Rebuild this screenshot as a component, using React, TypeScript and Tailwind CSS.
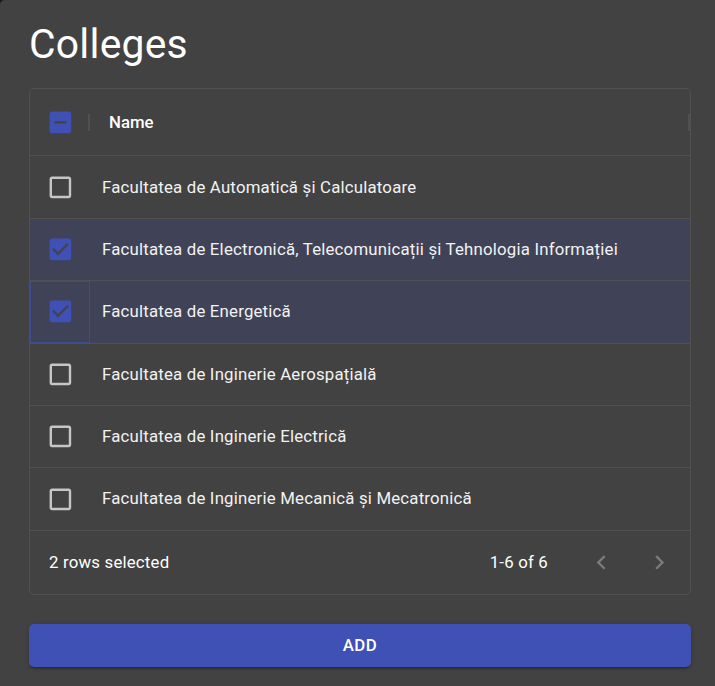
import React from 'react';

const colleges = [
  { id: 1, name: 'Facultatea de Automatică și Calculatoare', selected: false },
  { id: 2, name: 'Facultatea de Electronică, Telecomunicații și Tehnologia Informației', selected: true },
  { id: 3, name: 'Facultatea de Energetică', selected: true, focused: true },
  { id: 4, name: 'Facultatea de Inginerie Aerospațială', selected: false },
  { id: 5, name: 'Facultatea de Inginerie Electrică', selected: false },
  { id: 6, name: 'Facultatea de Inginerie Mecanică și Mecatronică', selected: false },
];

const CheckIcon: React.FC<{ state: 'on' | 'off' | 'mixed' }> = ({ state }) => {
  if (state === 'off') {
    return (
      <svg viewBox="0 0 24 24" className="w-[28.8px] h-[28.8px]" fill="rgba(255,255,255,0.7)">
        <path d="M19 5v14H5V5h14m0-2H5c-1.11 0-2 .9-2 2v14c0 1.1.89 2 2 2h14c1.1 0 2-.9 2-2V5c0-1.1-.9-2-2-2z" />
      </svg>
    );
  }
  if (state === 'mixed') {
    return (
      <svg viewBox="0 0 24 24" className="w-[28.8px] h-[28.8px]" fill="#3f51b5">
        <path d="M19 3H5c-1.1 0-2 .9-2 2v14c0 1.1.9 2 2 2h14c1.1 0 2-.9 2-2V5c0-1.1-.9-2-2-2zm-2 10H7v-2h10v2z" />
      </svg>
    );
  }
  return (
    <svg viewBox="0 0 24 24" className="w-[28.8px] h-[28.8px]" fill="#3f51b5">
      <path d="M19 3H5c-1.11 0-2 .9-2 2v14c0 1.1.89 2 2 2h14c1.1 0 2-.9 2-2V5c0-1.11-.89-2-2-2zm-9 14l-5-5 1.41-1.41L10 14.17l7.59-7.59L19 8l-9 9z" />
    </svg>
  );
};

export default function App() {
  return (
    <div className="w-[715px] h-[686px] bg-[#1c1c1c] overflow-hidden">
      <div className="h-full bg-[#424242] rounded-tl-[5px] text-white font-['Roboto',sans-serif]">
        {/* Titlu */}
        <h2 className="px-[29px] pt-[19px] text-[40.8px] leading-[50.4px] font-normal tracking-[0.25px]">
          Colleges
        </h2>

        <div className="pl-[29px] pr-[24px] pt-[19px]">
          {/* Grid */}
          <div className="border border-[#515151] rounded-[5px] text-[16.8px]">
            {/* Header */}
            <div className="flex h-[67px] items-center border-b border-[#515151]">
              <div className="w-[60px] h-full flex items-center justify-center relative">
                <CheckIcon state="mixed" />
                <div className="absolute right-0 top-[25px] w-[2px] h-[17px] bg-[#505050]" />
              </div>
              <div className="flex-1 h-full flex items-center pl-[19px] font-medium relative">
                Name
                <div className="absolute right-0 top-[25px] w-[2px] h-[17px] bg-[#505050]" />
              </div>
            </div>

            {/* Randuri */}
            {colleges.map((c) => (
              <div
                key={c.id}
                className={`flex h-[62.4px] items-center border-b border-[#515151] ${
                  c.selected ? 'bg-[#404357]' : ''
                }`}
              >
                <div
                  className={`w-[60px] h-full flex items-center justify-center ${
                    c.focused ? 'outline outline-1 -outline-offset-1 outline-[#3f51b5]/60' : ''
                  }`}
                >
                  <CheckIcon state={c.selected ? 'on' : 'off'} />
                </div>
                <div className="flex-1 pl-[12px] text-[#f2f2f2] tracking-[0.2px]">{c.name}</div>
              </div>
            ))}

            {/* Footer */}
            <div className="flex h-[63px] items-center justify-between pl-[19px] pr-[2px]">
              <span className="tracking-[0.2px]">2 rows selected</span>
              <div className="flex items-center">
                <span className="mr-[24px] tracking-[0.2px]">1-6 of 6</span>
                <div className="w-[58px] flex justify-center">
                  <svg viewBox="0 0 24 24" className="w-[28.8px] h-[28.8px]" fill="rgba(255,255,255,0.3)">
                    <path d="M15.41 16.59 10.83 12l4.58-4.59L14 6l-6 6 6 6 1.41-1.41z" />
                  </svg>
                </div>
                <div className="w-[58px] flex justify-center">
                  <svg viewBox="0 0 24 24" className="w-[28.8px] h-[28.8px]" fill="rgba(255,255,255,0.3)">
                    <path d="M8.59 16.59 13.17 12 8.59 7.41 10 6l6 6-6 6-1.41-1.41z" />
                  </svg>
                </div>
              </div>
            </div>
          </div>

          {/* Buton */}
          <button className="mt-[29px] w-full h-[43px] rounded-[5px] bg-[#3f51b5] text-white text-[16.8px] font-medium tracking-[0.5px] uppercase shadow-[0_3px_1px_-2px_rgba(0,0,0,0.2),0_2px_2px_0_rgba(0,0,0,0.14),0_1px_5px_0_rgba(0,0,0,0.12)]">
            Add
          </button>
        </div>
      </div>
    </div>
  );
}
